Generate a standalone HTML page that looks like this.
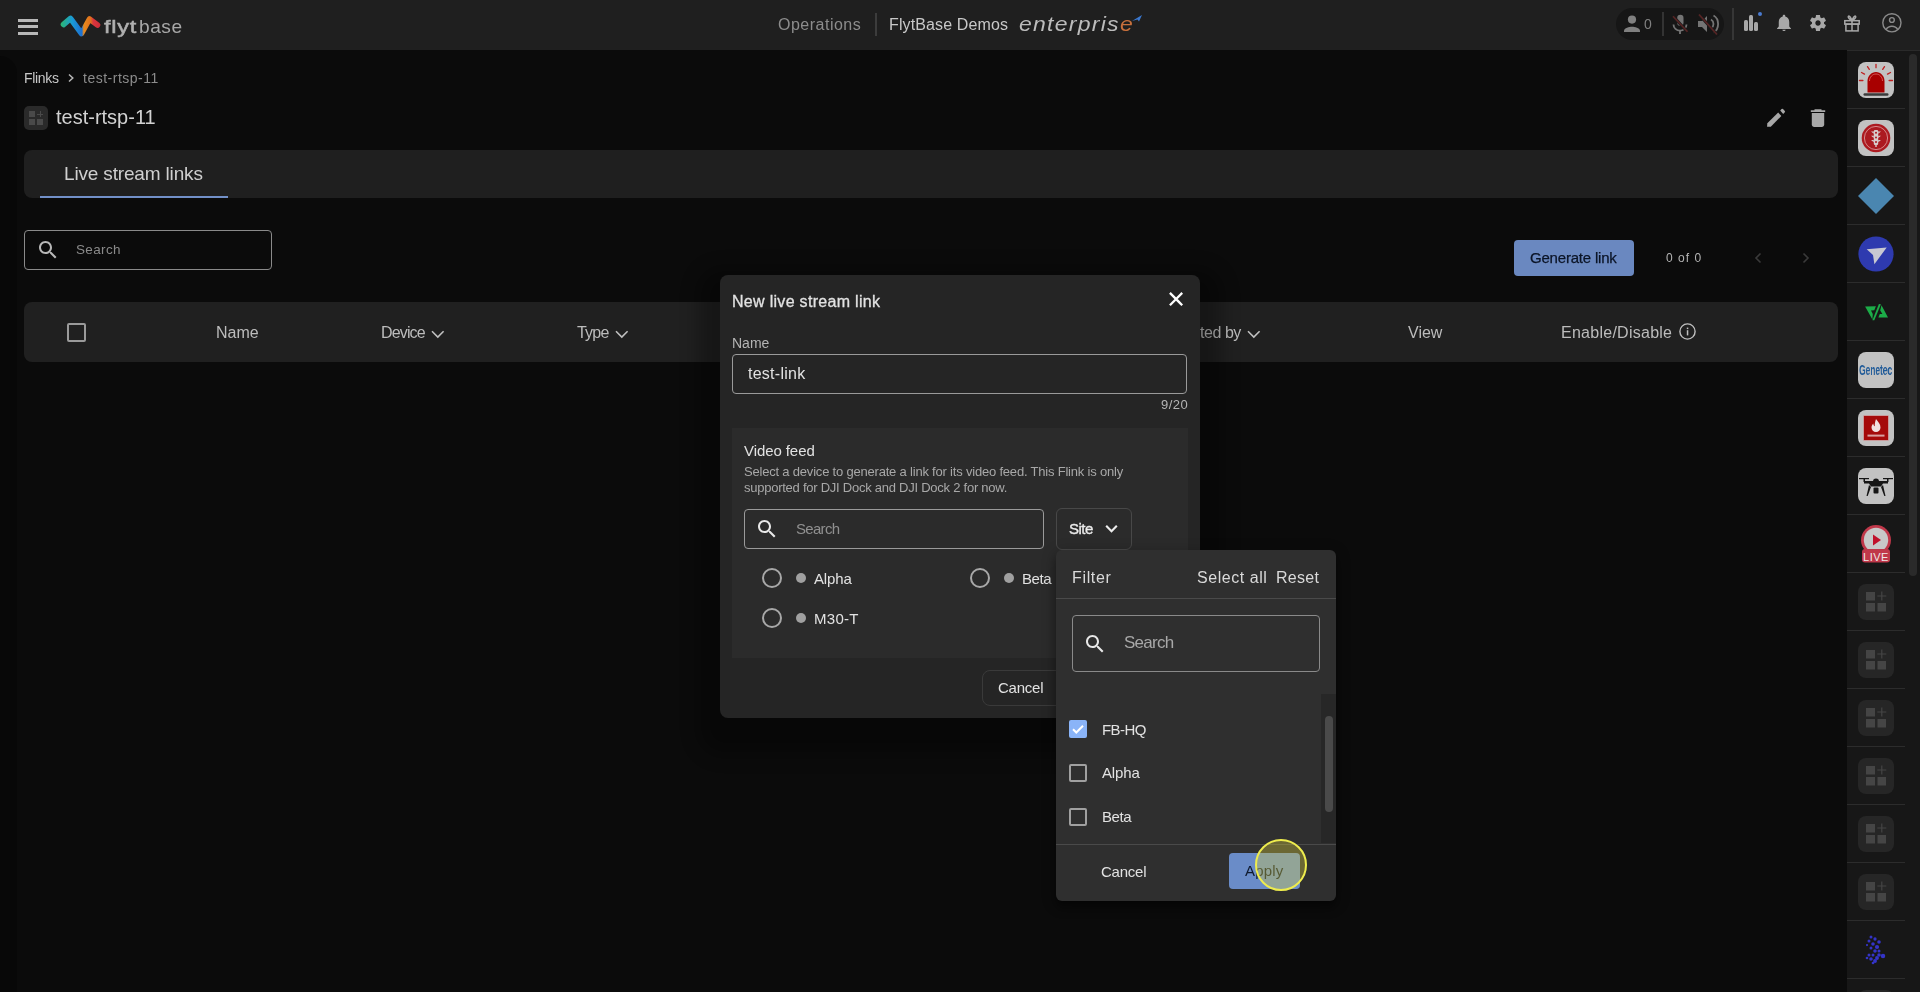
<!DOCTYPE html>
<html><head><meta charset="utf-8">
<style>
*{box-sizing:border-box;margin:0;padding:0}
html,body{width:1920px;height:992px;overflow:hidden;background:#0b0b0b;font-family:"Liberation Sans",sans-serif}
.a{position:absolute}
.t{position:absolute;white-space:nowrap;line-height:1;will-change:transform}
svg{position:absolute;display:block}
</style></head><body>
<!-- header -->
<div class="a" style="left:0;top:0;width:1920px;height:50px;background:#1f1f1f"></div>
<!-- hamburger -->
<div class="a" style="left:18px;top:19px;width:20px;height:3px;background:#b8b8b8"></div>
<div class="a" style="left:18px;top:25px;width:20px;height:3px;background:#b8b8b8"></div>
<div class="a" style="left:18px;top:32px;width:20px;height:3px;background:#b8b8b8"></div>
<!-- logo -->
<svg style="left:56px;top:10px" width="50" height="32" viewBox="56 10 50 32">
<defs><linearGradient id="lg" x1="61" y1="0" x2="99" y2="0" gradientUnits="userSpaceOnUse">
<stop offset="0" stop-color="#2bb673"/><stop offset="0.3" stop-color="#1a9ad6"/><stop offset="0.55" stop-color="#1d6fd0"/><stop offset="0.6" stop-color="#e98b1b"/><stop offset="0.78" stop-color="#e0701e"/><stop offset="0.85" stop-color="#d9363e"/><stop offset="1" stop-color="#cf2e3a"/></linearGradient></defs>
<path d="M63.5,24.5 L70.5,18.5 L81.5,33.5 L89.5,19 L97.5,25" fill="none" stroke="url(#lg)" stroke-width="5.6" stroke-linecap="round" stroke-linejoin="round"/>
</svg>
<div class="t" style="left:103.5px;top:17.5px;font-size:18.5px;color:#b0b0b0;letter-spacing:0.6px;-webkit-text-stroke:0.5px #b0b0b0;transform:scaleX(1.27);transform-origin:0 0">flyt</div><div class="t" style="left:139px;top:17.5px;font-size:18.5px;color:#a8a8a8;letter-spacing:0.5px;transform:scaleX(1.035);transform-origin:0 0">base</div>
<!-- center -->
<div class="t" style="left:778px;top:16.6px;font-size:16px;color:#8c8c8c;letter-spacing:0.5px">Operations</div>
<div class="a" style="left:875px;top:13px;width:2px;height:23px;background:#3c3c3c"></div>
<div class="t" style="left:889px;top:16.6px;font-size:16px;color:#c8c8c8;letter-spacing:0.12px">FlytBase Demos</div>
<div class="t" style="left:1019px;top:14.2px;font-size:20px;color:#bcbcbc;font-style:italic;letter-spacing:1.1px;transform:scaleX(1.15);transform-origin:0 0">enterpris<span style="color:#c8703c">e</span></div>
<svg style="left:1130px;top:13px" width="14" height="12" viewBox="0 0 14 12"><path d="M2,8 L12,2 L9,8.5 L7.5,6.5 Z" fill="#3a78d0"/></svg>
<!-- right pill -->
<div class="a" style="left:1616px;top:8px;width:108px;height:32px;background:#161616;border-radius:16px"></div>
<svg style="left:1620px;top:12px" width="24" height="24" viewBox="0 0 24 24"><circle cx="12" cy="7.6" r="4.1" fill="#808080"/><path d="M4,20 v-1.2 c0-2.6 5.3-4 8-4 s8,1.4 8,4 v1.2 z" fill="#808080"/></svg>
<div class="t" style="left:1644px;top:17px;font-size:14px;color:#808080">0</div>
<div class="a" style="left:1662px;top:12px;width:2px;height:24px;background:#333"></div>
<svg style="left:1668px;top:12px" width="24" height="24" viewBox="0 0 24 24"><rect x="9.2" y="2.8" width="6.3" height="11" rx="3.15" fill="#747474"/><path d="M5.5,12.5 c0,3.6 3,6.2 6.5,6.2 s6.5-2.6 6.5-6.2" fill="none" stroke="#747474" stroke-width="1.8"/><rect x="11.1" y="18.5" width="1.8" height="3.5" fill="#747474"/><path d="M5,4.2 L19.5,19.7" stroke="#1a1a1a" stroke-width="3"/><path d="M5,4.2 L19.5,19.7" stroke="#582424" stroke-width="1.6"/></svg>
<svg style="left:1696px;top:12px" width="24" height="24" viewBox="0 0 24 24"><path d="M2,9 h4 l5,-5 v16 l-5,-5 h-4 z" fill="#747474"/><path d="M15,7.5 c1.6,1 2.5,2.6 2.5,4.5 s-0.9,3.5-2.5,4.5" fill="none" stroke="#747474" stroke-width="1.8"/><path d="M17.5,3.5 c3,1.7 4.6,4.9 4.6,8.5 s-1.6,6.8-4.6,8.5" fill="none" stroke="#747474" stroke-width="1.8"/><path d="M3,2.5 L21,22.5" stroke="#1a1a1a" stroke-width="3"/><path d="M3,2.5 L21,22.5" stroke="#582424" stroke-width="1.6"/></svg>
<div class="a" style="left:1732px;top:8px;width:2px;height:32px;background:#363636"></div>
<!-- bar chart -->
<div class="a" style="left:1744px;top:20px;width:4px;height:11px;background:#a8a8a8;border-radius:1.5px"></div>
<div class="a" style="left:1749px;top:15px;width:4px;height:16px;background:#a8a8a8;border-radius:1.5px"></div>
<div class="a" style="left:1754px;top:22px;width:4px;height:9px;background:#a8a8a8;border-radius:1.5px"></div>
<div class="a" style="left:1757.7px;top:11.9px;width:4.6px;height:4.6px;background:#4a7bd0;border-radius:50%"></div>
<!-- bell -->
<svg style="left:1772px;top:12px" width="24" height="22" viewBox="0 0 24 22"><path d="M12,2.8 c-0.8,0-1.3,0.6-1.3,1.3 v0.5 C8,5.3 6.6,7.7 6.6,10.6 v5 l-1.8,2 v0.6 h14.4 v-0.6 l-1.8-2 v-5 c0-2.9-1.4-5.3-4.1-6 v-0.5 c0-0.7-0.5-1.3-1.3-1.3z M10.3,19 c0,0.9 0.8,1.5 1.7,1.5 s1.7-0.6 1.7-1.5z" fill="#a8a8a8" transform="translate(12 3) scale(0.97 0.92) translate(-12 -3)"/></svg>
<!-- gear -->
<svg style="left:1806px;top:10.8px" width="24" height="24" viewBox="0 0 24 24"><path d="M19.14 12.94c.04-.3.06-.61.06-.94 0-.32-.02-.64-.07-.94l2.03-1.58c.18-.14.23-.41.12-.61l-1.92-3.32c-.12-.22-.37-.29-.59-.22l-2.39.96c-.5-.38-1.03-.7-1.62-.94l-.36-2.54c-.04-.24-.24-.41-.48-.41h-3.84c-.24 0-.43.17-.47.41l-.36 2.54c-.59.24-1.13.57-1.62.94l-2.39-.96c-.22-.08-.47 0-.59.22L2.74 8.87c-.12.21-.08.47.12.61l2.030 1.58c-.05.3-.09.63-.09.94s.02.64.07.94l-2.03 1.58c-.18.14-.23.41-.12.61l1.92 3.32c.12.22.37.29.59.22l2.39-.96c.5.38 1.03.7 1.62.94l.36 2.54c.05.24.24.41.48.41h3.84c.24 0 .44-.17.47-.41l.36-2.54c.59-.24 1.13-.56 1.62-.94l2.39.96c.22.08.47 0 .59-.22l1.92-3.32c.12-.22.07-.47-.12-.61l-2.01-1.58zM12 15.2c-1.76 0-3.2-1.44-3.2-3.2s1.44-3.2 3.2-3.2 3.2 1.44 3.2 3.2-1.44 3.2-3.2 3.2z" fill="#a8a8a8" transform="translate(12 12) scale(0.84) translate(-12 -12)"/></svg>
<!-- gift -->
<svg style="left:1843px;top:13px" width="18" height="20" viewBox="0 0 18 20"><g fill="none" stroke="#a8a8a8" stroke-width="1.5"><rect x="2.9" y="11.1" width="12.2" height="6.8"/><rect x="1.8" y="7.7" width="14.4" height="3.4"/><path d="M9,7.7 V18"/><path d="M9,7.6 C8,4.6 6.3,2.4 5.4,3.2 C4.5,4 6.4,6.6 9,7.6 C11.6,6.6 13.5,4 12.6,3.2 C11.7,2.4 10,4.6 9,7.6z"/></g></svg>
<!-- account -->
<svg style="left:1881px;top:11px" width="22" height="22" viewBox="0 0 22 22"><g fill="none" stroke="#8a8a8a" stroke-width="1.4"><circle cx="10.9" cy="11.8" r="9.1"/><circle cx="10.9" cy="9" r="2.4"/><path d="M4.9,18.6 C6.3,16.4 8.5,15.2 10.9,15.2 S15.5,16.4 16.9,18.6"/></g></svg>
<!-- left subtle strip -->
<div class="a" style="left:0;top:56px;width:17px;height:936px;background:#080808;border-top-right-radius:18px"></div>
<!-- right sidebar -->
<div class="a" style="left:1847px;top:50px;width:73px;height:942px;background:#171717;border-top:1px solid #2a2a2a"></div>

<!-- breadcrumb -->
<div class="t" style="left:23.5px;top:71.4px;font-size:14px;color:#c8c8c8;letter-spacing:-0.3px">Flinks</div>
<svg style="left:66px;top:72px" width="10" height="12" viewBox="0 0 10 12"><path d="M3,2.5 L6.8,6 L3,9.5" fill="none" stroke="#b8b8b8" stroke-width="1.5"/></svg>
<div class="t" style="left:83px;top:71.4px;font-size:14px;color:#8c8c8c;letter-spacing:0.5px">test-rtsp-11</div>
<!-- title -->
<div class="a" style="left:24px;top:106px;width:24px;height:24px;background:#2a2a2a;border-radius:5px"></div>
<div class="a" style="left:29px;top:111px;width:6px;height:6px;background:#4a4a4a"></div>
<div class="a" style="left:29px;top:119px;width:6px;height:6px;background:#4a4a4a"></div>
<div class="a" style="left:37px;top:119px;width:6px;height:6px;background:#4a4a4a"></div>
<div class="a" style="left:39.5px;top:111px;width:1px;height:6px;background:#4a4a4a"></div>
<div class="a" style="left:37px;top:113.5px;width:6px;height:1px;background:#4a4a4a"></div>
<div class="t" style="left:56px;top:107.3px;font-size:20px;color:#d2d2d2">test-rtsp-11</div>
<!-- edit / delete -->
<svg style="left:1762px;top:104px" width="30" height="28" viewBox="0 0 30 28"><path d="M5.3,19.2 L5.1,22.8 L8.8,22.8 L19.3,12 L16.2,8.6 Z" fill="#a8a8a8"/><path d="M18.2,6.6 L19.6,5.1 Q20.3,4.4 21,5.1 L22.8,7 Q23.5,7.7 22.8,8.3 L21.2,10 Z" fill="#a8a8a8"/></svg>
<svg style="left:1808px;top:107px" width="20" height="22" viewBox="0 0 20 22"><path d="M2.8,3.2 h14.4 v1.8 h-14.4z M6.5,2.2 h7 v1.4 h-7z" fill="#a8a8a8"/><path d="M3.8,6 h12.4 v11.6 c0,1.3-1,2.4-2.4,2.4 h-7.6 c-1.3,0-2.4-1.1-2.4-2.4z" fill="#a8a8a8"/></svg>
<!-- sidebar icons -->
<div class="a" style="left:1847px;top:108px;width:58px;height:1px;background:#2c2c2c"></div>
<div class="a" style="left:1847px;top:166px;width:58px;height:1px;background:#2c2c2c"></div>
<div class="a" style="left:1847px;top:224px;width:58px;height:1px;background:#2c2c2c"></div>
<div class="a" style="left:1847px;top:282px;width:58px;height:1px;background:#2c2c2c"></div>
<div class="a" style="left:1847px;top:340px;width:58px;height:1px;background:#2c2c2c"></div>
<div class="a" style="left:1847px;top:398px;width:58px;height:1px;background:#2c2c2c"></div>
<div class="a" style="left:1847px;top:456px;width:58px;height:1px;background:#2c2c2c"></div>
<div class="a" style="left:1847px;top:514px;width:58px;height:1px;background:#2c2c2c"></div>
<div class="a" style="left:1847px;top:572px;width:58px;height:1px;background:#2c2c2c"></div>
<div class="a" style="left:1847px;top:630px;width:58px;height:1px;background:#2c2c2c"></div>
<div class="a" style="left:1847px;top:688px;width:58px;height:1px;background:#2c2c2c"></div>
<div class="a" style="left:1847px;top:746px;width:58px;height:1px;background:#2c2c2c"></div>
<div class="a" style="left:1847px;top:804px;width:58px;height:1px;background:#2c2c2c"></div>
<div class="a" style="left:1847px;top:862px;width:58px;height:1px;background:#2c2c2c"></div>
<div class="a" style="left:1847px;top:920px;width:58px;height:1px;background:#2c2c2c"></div>
<div class="a" style="left:1847px;top:978px;width:58px;height:1px;background:#2c2c2c"></div>
<div class="a" style="left:1909px;top:54px;width:8px;height:522px;background:#2a2a2a;border-radius:4px"></div>
<div class="a" style="left:1858px;top:62px;width:36px;height:36px;background:#c2c2c2;border-radius:8px"></div>
<svg style="left:1858px;top:62px" width="36" height="36" viewBox="0 0 36 36"><g stroke="#c02020" stroke-width="1.3" stroke-linecap="round"><path d="M18,2.5 v3.2"/><path d="M9.5,4.6 l1.8,2.8"/><path d="M26.5,4.6 l-1.8,2.8"/><path d="M3.5,10.5 l3,1.6"/><path d="M32.5,10.5 l-3,1.6"/><path d="M1.5,18.5 h3.4"/><path d="M34.5,18.5 h-3.4"/></g><path d="M9.5,30.5 V19 c0-5 3.8-9 8.5-9 s8.5,4 8.5,9 V30.5z" fill="#a80000"/><path d="M11.5,19 c0-3.8 2.9-7 6.5-7 s6.5,3.2 6.5,7" fill="none" stroke="#e07070" stroke-width="0.8"/><rect x="5.5" y="31.2" width="25" height="2.6" rx="1.2" fill="#3a3a3a"/></svg>
<div class="a" style="left:1858px;top:120px;width:36px;height:36px;background:#c2c2c2;border-radius:8px"></div>
<svg style="left:1858px;top:120px" width="36" height="36" viewBox="0 0 36 36"><circle cx="18" cy="18" r="14.3" fill="#ac1a20"/><circle cx="18" cy="18" r="11.6" fill="none" stroke="#e8b8b8" stroke-width="0.7"/><rect x="15.8" y="10" width="4.4" height="15" rx="1.2" fill="#d8cccc"/><g fill="#d8cccc"><path d="M13,11.5 h2.8 v2.2z"/><path d="M23,11.5 h-2.8 v2.2z"/><path d="M13,15.8 h2.8 v2.2z"/><path d="M23,15.8 h-2.8 v2.2z"/><path d="M13,20 h2.8 v2.2z"/><path d="M23,20 h-2.8 v2.2z"/><rect x="17.3" y="25" width="1.4" height="2"/></g><g fill="#ac1a20"><circle cx="18" cy="12.8" r="1"/><circle cx="18" cy="17.4" r="1"/><circle cx="18" cy="22" r="1"/></g></svg>
<svg style="left:1858px;top:178px" width="36" height="36" viewBox="0 0 36 36"><path d="M18,0 L36,18 L18,36 L0,18z" fill="#4a86b0"/></svg>
<svg style="left:1858px;top:236px" width="36" height="36" viewBox="0 0 36 36"><circle cx="18" cy="18" r="17.6" fill="#2e3aaf"/><path d="M8.7,13.2 L28.7,11.4 L16.4,28.3 L15,19z" fill="#c8c8d2"/></svg>
<svg style="left:1860px;top:298px" width="32" height="28" viewBox="0 0 32 28"><g fill="#1cac48"><path d="M5.1,8.5 L15.9,8.3 L14.3,12.3 L11,12.4 L12.8,16 L12.4,21.6 Z"/><path d="M12.4,22.3 L18.9,6 L20.9,6.2 L14.3,22.3 Z"/><path d="M21.5,7.2 L28,19.5 L18.4,19.5 L19.8,16 L22.4,16 L20.2,12.6 Z"/></g></svg>
<div class="a" style="left:1858px;top:352px;width:36px;height:36px;background:#c2c2c2;border-radius:8px"></div>
<div class="t" style="left:1858.5px;top:362.5px;font-size:14px;font-weight:bold;color:#1f5a98;letter-spacing:-0.3px;transform:scaleX(0.62);transform-origin:0 0">Genetec</div>
<div class="a" style="left:1858px;top:410px;width:36px;height:36px;background:#c2c2c2;border-radius:8px"></div>
<div class="a" style="left:1864px;top:416px;width:24px;height:24px;background:#a50a0a;box-shadow:0 0 0 0.6px #d08080"></div>
<svg style="left:1864px;top:416px" width="24" height="24" viewBox="0 0 24 24"><path d="M12,3 c2,3 4.5,5 4.5,8.5 c0,2.6-2,4.5-4.5,4.5 s-4.5-1.9-4.5-4.5 c0-2 1-3 1.8-4 c0,1.5 0.8,2.5 1.5,2.8 c-0.3-2.5 0.5-5 1.2-7.3z" fill="#f0e0e0"/><rect x="3.5" y="18.6" width="17" height="2" fill="#d8a0a0"/></svg>
<div class="a" style="left:1858px;top:468px;width:36px;height:36px;background:#c2c2c2;border-radius:8px"></div>
<svg style="left:1858px;top:468px" width="36" height="36" viewBox="0 0 36 36"><g fill="#151515"><rect x="1" y="10" width="10" height="1.2"/><rect x="25" y="10" width="10" height="1.2"/><rect x="5.5" y="10" width="1.5" height="4"/><rect x="29" y="10" width="1.5" height="4"/><path d="M6,13 h24 v2.5 h-5 l-2,3 h-10 l-2,-3 h-5z"/><circle cx="18" cy="13.5" r="3"/><path d="M11,17 l-2.5,11 h1.2 l3.3,-9z"/><path d="M25,17 l2.5,11 h-1.2 l-3.3,-9z"/><rect x="15.5" y="19.5" width="5" height="6" rx="1"/></g></svg>
<svg style="left:1858px;top:524px" width="36" height="42" viewBox="0 0 36 42"><circle cx="18" cy="16" r="15" fill="#c0384a"/><circle cx="18" cy="16" r="12.2" fill="#c8c8c8"/><path d="M15,10.5 L23,16 L15,21.5z" fill="#c0102a"/><rect x="4" y="25" width="28" height="13.5" rx="3" fill="#c0384a"/><text x="18" y="36.5" text-anchor="middle" font-family="Liberation Sans" font-size="11" fill="#f0e8e8" letter-spacing="0.5">LIVE</text></svg>
<div class="a" style="left:1858px;top:584px;width:36px;height:36px;background:#262626;border-radius:8px"></div>
<svg style="left:1858px;top:584px" width="36" height="36" viewBox="0 0 36 36"><g fill="#454545"><rect x="8" y="8" width="9" height="8.5"/><rect x="8" y="19" width="9" height="8.5"/><rect x="19.5" y="19" width="8.5" height="8.5"/></g><path d="M23.8,7.5 v9 M19.3,12 h9" stroke="#454545" stroke-width="1.2"/></svg>
<div class="a" style="left:1858px;top:642px;width:36px;height:36px;background:#262626;border-radius:8px"></div>
<svg style="left:1858px;top:642px" width="36" height="36" viewBox="0 0 36 36"><g fill="#454545"><rect x="8" y="8" width="9" height="8.5"/><rect x="8" y="19" width="9" height="8.5"/><rect x="19.5" y="19" width="8.5" height="8.5"/></g><path d="M23.8,7.5 v9 M19.3,12 h9" stroke="#454545" stroke-width="1.2"/></svg>
<div class="a" style="left:1858px;top:700px;width:36px;height:36px;background:#262626;border-radius:8px"></div>
<svg style="left:1858px;top:700px" width="36" height="36" viewBox="0 0 36 36"><g fill="#454545"><rect x="8" y="8" width="9" height="8.5"/><rect x="8" y="19" width="9" height="8.5"/><rect x="19.5" y="19" width="8.5" height="8.5"/></g><path d="M23.8,7.5 v9 M19.3,12 h9" stroke="#454545" stroke-width="1.2"/></svg>
<div class="a" style="left:1858px;top:758px;width:36px;height:36px;background:#262626;border-radius:8px"></div>
<svg style="left:1858px;top:758px" width="36" height="36" viewBox="0 0 36 36"><g fill="#454545"><rect x="8" y="8" width="9" height="8.5"/><rect x="8" y="19" width="9" height="8.5"/><rect x="19.5" y="19" width="8.5" height="8.5"/></g><path d="M23.8,7.5 v9 M19.3,12 h9" stroke="#454545" stroke-width="1.2"/></svg>
<div class="a" style="left:1858px;top:816px;width:36px;height:36px;background:#262626;border-radius:8px"></div>
<svg style="left:1858px;top:816px" width="36" height="36" viewBox="0 0 36 36"><g fill="#454545"><rect x="8" y="8" width="9" height="8.5"/><rect x="8" y="19" width="9" height="8.5"/><rect x="19.5" y="19" width="8.5" height="8.5"/></g><path d="M23.8,7.5 v9 M19.3,12 h9" stroke="#454545" stroke-width="1.2"/></svg>
<div class="a" style="left:1858px;top:874px;width:36px;height:36px;background:#262626;border-radius:8px"></div>
<svg style="left:1858px;top:874px" width="36" height="36" viewBox="0 0 36 36"><g fill="#454545"><rect x="8" y="8" width="9" height="8.5"/><rect x="8" y="19" width="9" height="8.5"/><rect x="19.5" y="19" width="8.5" height="8.5"/></g><path d="M23.8,7.5 v9 M19.3,12 h9" stroke="#454545" stroke-width="1.2"/></svg>
<svg style="left:1860px;top:930px" width="30" height="40" viewBox="1860 930 30 40"><circle cx="1871" cy="937" r="1.5" fill="#3434c8"/><circle cx="1875" cy="939" r="1.6500000000000001" fill="#3434c8"/><circle cx="1879" cy="942" r="1.7999999999999998" fill="#3434c8"/><circle cx="1869" cy="941" r="1.5" fill="#3434c8"/><circle cx="1873" cy="944" r="1.7999999999999998" fill="#3434c8"/><circle cx="1877" cy="947" r="2.0999999999999996" fill="#3434c8"/><circle cx="1867" cy="945" r="1.125" fill="#3434c8"/><circle cx="1871" cy="948" r="1.5" fill="#3434c8"/><circle cx="1875" cy="951" r="1.7999999999999998" fill="#3434c8"/><circle cx="1879" cy="955" r="1.7999999999999998" fill="#3434c8"/><circle cx="1873" cy="955" r="1.5" fill="#3434c8"/><circle cx="1869" cy="955" r="1.5" fill="#3434c8"/><circle cx="1871" cy="959" r="1.7999999999999998" fill="#3434c8"/><circle cx="1875" cy="961" r="1.9500000000000002" fill="#3434c8"/><circle cx="1883" cy="956" r="2.25" fill="#3434c8"/><circle cx="1877" cy="958" r="1.9500000000000002" fill="#3434c8"/><circle cx="1867" cy="958" r="1.35" fill="#3434c8"/><circle cx="1873" cy="963" r="1.35" fill="#3434c8"/><circle cx="1879" cy="951" r="1.5" fill="#3434c8"/></svg>
<div class="a" style="left:1858px;top:990px;width:36px;height:10px;background:#262626;border-radius:8px 8px 0 0"></div>
<!-- tab bar -->
<div class="a" style="left:24px;top:150px;width:1814px;height:48px;background:#1f1f1f;border-radius:8px"></div>
<div class="t" style="left:63.5px;top:163.9px;font-size:19px;color:#cfcfcf;letter-spacing:-0.16px">Live stream links</div>
<div class="a" style="left:40px;top:196px;width:188px;height:2px;background:#7290c8"></div>
<!-- main search -->
<div class="a" style="left:24px;top:230px;width:248px;height:40px;border:1px solid #8a8a8a;border-radius:4px"></div>
<!-- table header -->
<div class="a" style="left:24px;top:302px;width:1814px;height:60px;background:#202020;border-radius:8px"></div>
<svg style="left:36px;top:238px" width="24" height="24" viewBox="0 0 24 24"><path d="M15.5 14h-.79l-.28-.27C15.41 12.59 16 11.11 16 9.5 16 5.91 13.09 3 9.5 3S3 5.91 3 9.5 5.91 16 9.5 16c1.61 0 3.090-.59 4.23-1.57l.27.28v.79l5 4.99L20.49 19l-4.99-5zm-6 0C7.01 14 5 11.99 5 9.5S7.01 5 9.5 5 14 7.01 14 9.5 11.99 14 9.5 14z" fill="#b8b8b8"/></svg>
<div class="t" style="left:75.5px;top:242.5px;font-size:13.5px;color:#8a8a8a;letter-spacing:0.35px">Search</div>
<div class="a" style="left:66.5px;top:322.5px;width:19px;height:19px;border:2px solid #9a9a9a;border-radius:2px"></div>
<div class="t" style="left:215.5px;top:324.5px;font-size:16px;color:#bcbcbc">Name</div>
<div class="t" style="left:381px;top:324.5px;font-size:16px;color:#bcbcbc;letter-spacing:-0.85px">Device</div>
<svg style="left:429px;top:325px" width="18" height="16" viewBox="0 0 18 16"><path d="M3,6.3 L8.8,12.1 L14.6,6.3" fill="none" stroke="#c0c0c0" stroke-width="1.6"/></svg>
<div class="t" style="left:577px;top:324.5px;font-size:16px;color:#bcbcbc;letter-spacing:-0.8px">Type</div>
<svg style="left:613px;top:325px" width="18" height="16" viewBox="0 0 18 16"><path d="M3,6.3 L8.8,12.1 L14.6,6.3" fill="none" stroke="#c0c0c0" stroke-width="1.6"/></svg>
<div class="t" style="left:1200px;top:324.5px;font-size:16px;color:#bcbcbc;letter-spacing:-0.45px">ted by</div>
<svg style="left:1244.5px;top:325px" width="18" height="16" viewBox="0 0 18 16"><path d="M3,6.3 L8.8,12.1 L14.6,6.3" fill="none" stroke="#c0c0c0" stroke-width="1.6"/></svg>
<div class="t" style="left:1408px;top:324.5px;font-size:16px;color:#bcbcbc">View</div>
<div class="t" style="left:1561px;top:324.5px;font-size:16px;color:#bcbcbc;letter-spacing:0.26px">Enable/Disable</div>
<svg style="left:1678px;top:322px" width="19" height="19" viewBox="0 0 19 19"><circle cx="9.5" cy="9.5" r="7.6" fill="none" stroke="#c0c0c0" stroke-width="1.4"/><rect x="8.8" y="8.2" width="1.5" height="5.2" fill="#c0c0c0"/><rect x="8.8" y="5.6" width="1.5" height="1.5" fill="#c0c0c0"/></svg>
<!-- generate link -->
<div class="a" style="left:1514px;top:240px;width:120px;height:36px;background:#6a88c0;border-radius:4px"></div>

<div class="t" style="left:1529.5px;top:249.6px;font-size:15px;color:#0b1426;letter-spacing:-0.2px;-webkit-text-stroke:0.25px #0b1426">Generate link</div>
<div class="t" style="left:1665.5px;top:251.6px;font-size:12px;color:#b4b4b4;letter-spacing:1.05px">0 of 0</div>
<svg style="left:1750px;top:250px" width="16" height="16" viewBox="0 0 16 16"><path d="M10.5,3.5 L6,8 L10.5,12.5" fill="none" stroke="#3a3a3a" stroke-width="1.6"/></svg>
<svg style="left:1798px;top:250px" width="16" height="16" viewBox="0 0 16 16"><path d="M5.5,3.5 L10,8 L5.5,12.5" fill="none" stroke="#3a3a3a" stroke-width="1.6"/></svg>
<!-- modal -->
<div class="a" style="left:720px;top:275px;width:480px;height:443px;background:#252525;border-radius:8px;box-shadow:0 15px 18px 22px rgba(0,0,0,.3)"></div>
<div class="a" style="left:732px;top:354px;width:455px;height:40px;border:1px solid #9a9a9a;border-radius:4px"></div>
<div class="a" style="left:732px;top:428px;width:456px;height:230px;background:#2b2b2b"></div>
<div class="a" style="left:744px;top:509px;width:300px;height:40px;border:1px solid #9a9a9a;border-radius:4px"></div>
<div class="a" style="left:1056px;top:508px;width:76px;height:42px;border:1px solid #484848;border-radius:6px"></div>
<div class="a" style="left:982px;top:670px;width:100px;height:36px;border:1px solid #3a3a3a;border-radius:8px"></div>

<div class="t" style="left:731.5px;top:293.5px;font-size:16px;color:#e2e2e2;letter-spacing:0.3px;-webkit-text-stroke:0.3px #e2e2e2">New live stream link</div>
<svg style="left:1163.5px;top:286.8px" width="24" height="24" viewBox="0 0 24 24"><path d="M5.9,5.9 L18.2,18.2 M18.2,5.9 L5.9,18.2" stroke="#ffffff" stroke-width="2.3"/></svg>
<div class="t" style="left:731.5px;top:336.2px;font-size:14px;color:#b4b4b4">Name</div>
<div class="t" style="left:747.5px;top:365.9px;font-size:16px;color:#e2e2e2;letter-spacing:0.26px">test-link</div>
<div class="t" style="left:1161px;top:397.5px;font-size:13px;color:#b4b4b4;letter-spacing:0.45px">9/20</div>
<div class="t" style="left:743.5px;top:442.6px;font-size:15px;color:#e2e2e2;letter-spacing:-0.08px">Video feed</div>
<div class="t" style="left:743.5px;top:465px;font-size:13px;color:#a8a8a8;letter-spacing:-0.2px">Select a device to generate a link for its video feed. This Flink is only</div>
<div class="t" style="left:743.5px;top:481px;font-size:13px;color:#a8a8a8;letter-spacing:-0.25px">supported for DJI Dock and DJI Dock 2 for now.</div>
<svg style="left:755px;top:517px" width="24" height="24" viewBox="0 0 24 24"><path d="M15.5 14h-.79l-.28-.27C15.41 12.59 16 11.11 16 9.5 16 5.91 13.09 3 9.5 3S3 5.91 3 9.5 5.91 16 9.5 16c1.61 0 3.090-.59 4.23-1.57l.27.28v.79l5 4.99L20.49 19l-4.99-5zm-6 0C7.01 14 5 11.99 5 9.5S7.01 5 9.5 5 14 7.01 14 9.5 11.99 14 9.5 14z" fill="#e8e8e8"/></svg>
<div class="t" style="left:795.5px;top:520.6px;font-size:15px;color:#909090;letter-spacing:-0.7px">Search</div>
<div class="t" style="left:1069px;top:520.8px;font-size:15px;color:#ececec;letter-spacing:-0.5px;-webkit-text-stroke:0.35px #ececec">Site</div>
<svg style="left:1103px;top:520px" width="17" height="17" viewBox="0 0 16 16"><path d="M3,5.5 L8,10.5 L13,5.5" fill="none" stroke="#ececec" stroke-width="2"/></svg>
<div class="a" style="left:762px;top:568px;width:20px;height:20px;border:2px solid #a8a8a8;border-radius:50%"></div>
<div class="a" style="left:796px;top:573px;width:10px;height:10px;background:#a0a0a0;border-radius:50%"></div>
<div class="t" style="left:813.5px;top:571.2px;font-size:15px;color:#e2e2e2;letter-spacing:-0.14px">Alpha</div>
<div class="a" style="left:970px;top:568px;width:20px;height:20px;border:2px solid #a8a8a8;border-radius:50%"></div>
<div class="a" style="left:1004px;top:573px;width:10px;height:10px;background:#a0a0a0;border-radius:50%"></div>
<div class="t" style="left:1021.5px;top:571.2px;font-size:15px;color:#e2e2e2;letter-spacing:-0.42px">Beta</div>
<div class="a" style="left:762px;top:608px;width:20px;height:20px;border:2px solid #a8a8a8;border-radius:50%"></div>
<div class="a" style="left:796px;top:613px;width:10px;height:10px;background:#a0a0a0;border-radius:50%"></div>
<div class="t" style="left:813.5px;top:611px;font-size:15px;color:#e2e2e2;letter-spacing:0.3px">M30-T</div>
<div class="t" style="left:997.5px;top:680px;font-size:15px;color:#e2e2e2;letter-spacing:-0.23px">Cancel</div>
<!-- popover -->
<div class="a" style="left:1056px;top:550px;width:280px;height:351px;background:#2f2f2f;border-radius:6px;box-shadow:0 5px 5px -3px rgba(0,0,0,.3),0 8px 10px 1px rgba(0,0,0,.24),0 3px 14px 2px rgba(0,0,0,.2)"></div>
<div class="a" style="left:1056px;top:598px;width:280px;height:1px;background:#4a4a4a"></div>
<div class="a" style="left:1072px;top:615px;width:248px;height:57px;border:1px solid #8a8a8a;border-radius:4px"></div>
<div class="a" style="left:1321px;top:694px;width:15px;height:149px;background:#272727"></div>
<div class="a" style="left:1325px;top:716px;width:8px;height:96px;background:#4a4a4a;border-radius:4px"></div>
<div class="a" style="left:1056px;top:844px;width:280px;height:1px;background:#4a4a4a"></div>
<div class="a" style="left:1229px;top:853px;width:71px;height:36px;background:#6a8cc8;border-radius:4px"></div>
<div class="t" style="left:1071.5px;top:570.1px;font-size:16px;color:#dadada;letter-spacing:0.66px">Filter</div>
<div class="t" style="left:1197px;top:570.1px;font-size:16px;color:#dadada;letter-spacing:0.54px">Select all</div>
<div class="t" style="left:1275.5px;top:570.1px;font-size:16px;color:#dadada;letter-spacing:0.26px">Reset</div>
<svg style="left:1083px;top:632px" width="24" height="24" viewBox="0 0 24 24"><path d="M15.5 14h-.79l-.28-.27C15.41 12.59 16 11.11 16 9.5 16 5.91 13.09 3 9.5 3S3 5.91 3 9.5 5.91 16 9.5 16c1.61 0 3.090-.59 4.23-1.57l.27.28v.79l5 4.99L20.49 19l-4.99-5zm-6 0C7.01 14 5 11.99 5 9.5S7.01 5 9.5 5 14 7.01 14 9.5 11.99 14 9.5 14z" fill="#e8e8e8"/></svg>
<div class="t" style="left:1123.5px;top:634.1px;font-size:17px;color:#a8a8a8;letter-spacing:-0.72px">Search</div>
<div class="a" style="left:1069px;top:720px;width:18px;height:18px;background:#8ab4f8;border-radius:2px"></div>
<svg style="left:1069px;top:720px" width="18" height="18" viewBox="0 0 18 18"><path d="M4,9.2 L7.3,12.5 L14,5.8" fill="none" stroke="#ffffff" stroke-width="2"/></svg>
<div class="t" style="left:1101.5px;top:721.6px;font-size:15px;color:#e2e2e2;letter-spacing:-0.56px">FB-HQ</div>
<div class="a" style="left:1069px;top:764px;width:18px;height:18px;border:2px solid #a0a0a0;border-radius:2px"></div>
<div class="t" style="left:1101.5px;top:765.3px;font-size:15px;color:#e2e2e2;letter-spacing:-0.14px">Alpha</div>
<div class="a" style="left:1069px;top:808px;width:18px;height:18px;border:2px solid #a0a0a0;border-radius:2px"></div>
<div class="t" style="left:1101.5px;top:809.3px;font-size:15px;color:#e2e2e2;letter-spacing:-0.42px">Beta</div>
<div class="t" style="left:1101px;top:863.5px;font-size:15px;color:#e2e2e2;letter-spacing:-0.23px">Cancel</div>
<div class="t" style="left:1244.5px;top:863.3px;font-size:15px;color:#0f1a2e;letter-spacing:0.18px">Apply</div>
<!-- cursor -->
<div class="a" style="left:1255px;top:839px;width:52px;height:52px;border:2.6px solid #eeec4e;border-radius:50%;background:rgba(220,210,60,0.35)"></div>
</body></html>
